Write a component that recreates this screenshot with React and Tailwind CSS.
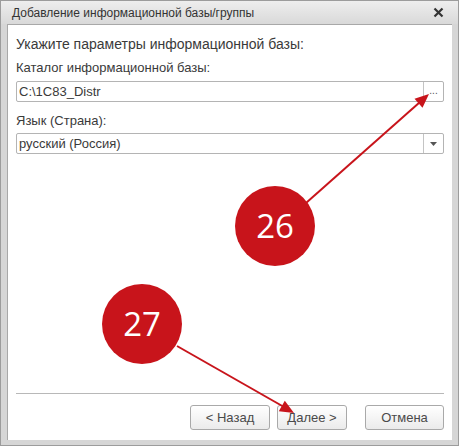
import React from 'react';

const RED = '#c8141b';

const Annotations = () => (
  <svg className="absolute inset-0 pointer-events-none" width="459" height="446" viewBox="0 0 459 446">
    {/* arrow from 26 to the browse button */}
    <line x1="305" y1="202" x2="419" y2="101" stroke={RED} strokeWidth="2" />
    <polygon points="428,93 421.5,106.8 413.5,97.8" fill={RED} />
    {/* arrow from 27 to the Next button */}
    <line x1="176" y1="345" x2="283" y2="406" stroke={RED} strokeWidth="2" />
    <polygon points="293,412 277.8,410.2 283.8,399.8" fill={RED} />
    <circle cx="274" cy="225" r="40" fill={RED} />
    <circle cx="141" cy="323" r="40" fill={RED} />
    <text x="274" y="237" textAnchor="middle" fill="#fff" fontSize="33" fontFamily="'Open Sans', 'Noto Sans', sans-serif">26</text>
    <text x="141" y="335" textAnchor="middle" fill="#fff" fontSize="33" fontFamily="'Open Sans', 'Noto Sans', sans-serif">27</text>
  </svg>
);

const Button = ({ children }) => (
  <button className="h-[25px] rounded-[3px] border border-[#a9a9a9] bg-gradient-to-b from-white to-[#ebebeb] text-[13px] text-[#4a4a4a] shadow-[inset_0_1px_0_#fff]">
    {children}
  </button>
);

export default function App() {
  return (
    <div
      className="relative w-[459px] h-[446px] flex flex-col bg-[#d6d6d6] border border-[#9c9c9c] overflow-hidden"
      style={{ fontFamily: "'Liberation Sans', Arial, sans-serif" }}
    >
      {/* Title bar */}
      <div className="h-[23px] flex items-center justify-between pl-[11px] pr-[14px] bg-gradient-to-b from-[#eeeeee] to-[#d9d9d9]">
        <span className="text-[12px] text-[#333]">Добавление информационной базы/группы</span>
        <svg width="11" height="11" viewBox="0 0 11 11">
          <path d="M1.5 1.5 L9.5 9.5 M9.5 1.5 L1.5 9.5" stroke="#333" strokeWidth="2.2" />
        </svg>
      </div>

      {/* Client area */}
      <div className="flex-1 mx-[6px] mb-[5px] bg-white border-l border-t border-[#a8a8a8] flex flex-col px-[8px] text-[13px] text-[#3a3a3a]">
        <div className="mt-[11px] leading-[16px] text-[14px]">Укажите параметры информационной базы:</div>

        <div className="mt-[8px] leading-[16px]">Каталог информационной базы:</div>
        <div className="mt-[5px] h-[21px] flex border border-[#b4b4b4] rounded-[2px]">
          <div className="flex-1 flex items-center pl-[2px]">C:\1C83_Distr</div>
          <div className="w-[20px] border-l border-[#c4c4c4] flex items-center justify-center text-[10px] text-[#555] leading-none pb-[2px]">...</div>
        </div>

        <div className="mt-[11px] leading-[16px]">Язык (Страна):</div>
        <div className="mt-[4px] h-[21px] flex border border-[#b4b4b4] rounded-[2px]">
          <div className="flex-1 flex items-center pl-[2px]">русский (Россия)</div>
          <div className="w-[20px] border-l border-[#c4c4c4] flex items-center justify-center">
            <svg width="7" height="4" viewBox="0 0 7 4">
              <path d="M0 0 L7 0 L3.5 4 Z" fill="#555" />
            </svg>
          </div>
        </div>

        <div className="flex-1" />

        <div className="border-t border-[#b8b8b8]" />
        <div className="mt-[11px] mb-[10px] flex justify-end">
          <div className="w-[80px] flex flex-col"><Button>&lt; Назад</Button></div>
          <div className="w-[70px] flex flex-col ml-[7px]"><Button>Далее &gt;</Button></div>
          <div className="w-[79px] flex flex-col ml-[18px]"><Button>Отмена</Button></div>
        </div>
      </div>

      <Annotations />
    </div>
  );
}
